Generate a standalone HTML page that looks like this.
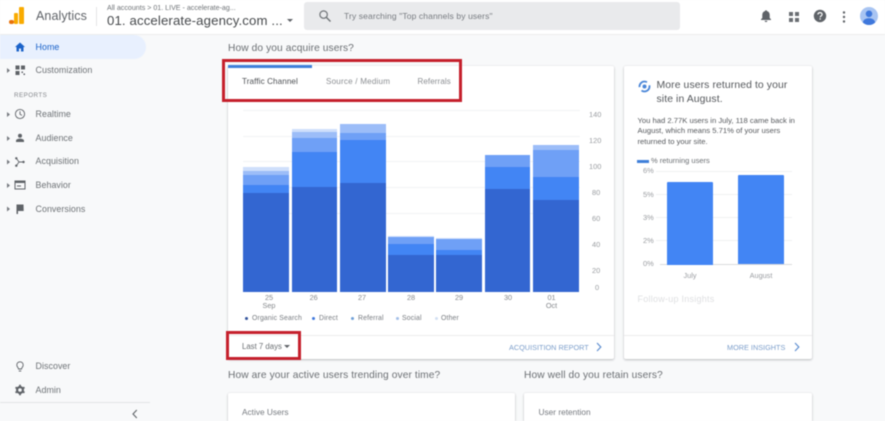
<!DOCTYPE html>
<html><head><meta charset="utf-8">
<style>
*{box-sizing:border-box}
html,body{margin:0;padding:0;width:885px;height:421px;overflow:hidden;background:#f8f9fa;font-family:"Liberation Sans",sans-serif;color:#5f6368}
#r{position:absolute;left:0;top:0;width:885px;height:421px;overflow:hidden;filter:blur(.4px)}
.a{position:absolute;white-space:nowrap}
.nav{font-size:8.900px;color:#6f7377;left:35.500px;letter-spacing:.05px}
.card{position:absolute;background:#fff;box-shadow:0 1px 2px rgba(60,64,67,.3),0 0 2px rgba(60,64,67,.08);border-radius:2px}
.h{font-size:10.200px;color:#6b6f73;letter-spacing:.1px}
.b{position:absolute;width:45.500px}
.b i{position:absolute;left:0;right:0;display:block}
.o{background:#3366d1}.d{background:#4285f4}.f{background:#6fa0f6}.s{background:#9cbdf8}.t{background:#cfdffb}
.yl{font-size:7.400px;color:#9a9da1;left:589px}
.xl{font-size:7.300px;color:#85888c;text-align:center;width:30px}
.g{position:absolute;height:1px;background:#f2f3f4}
.lg{font-size:6.900px;color:#777b80;letter-spacing:.15px}
.dot{position:absolute;width:3px;height:3px;border-radius:50%}
.red{position:absolute;border:3px solid #c5202c}
svg{position:absolute;display:block}
</style></head><body><div id="r">

<div class="a" style="left:0;top:0;width:885px;height:35px;background:#fff;border-bottom:1px solid #eceded"></div>
<div class="a" style="left:9px;top:20px;width:5px;height:4px;background:#e8710a;border-radius:2px"></div>
<div class="a" style="left:14px;top:13px;width:4px;height:11px;background:#f9ab00;border-radius:1px"></div>
<div class="a" style="left:19px;top:7px;width:5px;height:17px;background:#f9ab00;border-radius:1px"></div>
<div class="a" style="left:36px;top:8.500px;font-size:12.500px;color:#5f6368;letter-spacing:.1px">Analytics</div>
<div class="a" style="left:96px;top:7px;width:1px;height:19px;background:#e3e4e5"></div>
<div class="a" style="left:107px;top:3.500px;font-size:7.100px;color:#6f7377">All accounts &gt; 01. LIVE - accelerate-ag...</div>
<div class="a" style="left:107px;top:13px;font-size:13.200px;color:#474a4d;letter-spacing:.13px">01. accelerate-agency.com ...</div>
<div class="a" style="left:287px;top:19px;border:3.500px solid transparent;border-top:3.500px solid #5f6368;border-bottom:0"></div>
<div class="a" style="left:304px;top:2px;width:376px;height:28px;background:#e9eaec;border-radius:3px"></div>
<svg style="left:318px;top:9px" width="14" height="14" viewBox="0 0 14 14"><circle cx="5.600" cy="5.600" r="3.700" fill="none" stroke="#6f7377" stroke-width="1.200"/><path d="M8.500 8.500L12.500 12.500" stroke="#6f7377" stroke-width="1.400"/></svg>
<div class="a" style="left:344px;top:10.500px;font-size:8.500px;color:#777b80;letter-spacing:.12px">Try searching "Top channels by users"</div>

<svg style="left:759px;top:9px" width="14" height="14" viewBox="0 0 14 14"><path d="M7 1.200c.6 0 1 .4 1 .9 1.800.5 2.700 2 2.700 3.800V9l1.300 1.300v.7H2v-.7L3.300 9V5.900C3.300 4.100 4.200 2.600 6 2.100c0-.5.4-.9 1-.9zM5.700 11.700h2.600A1.300 1.300 0 0 1 5.700 11.700z" fill="#5f6368"/></svg>
<svg style="left:789px;top:12px" width="10" height="10" viewBox="0 0 10 10" fill="#6a6e72"><rect x="0" y="0" width="4" height="4"/><rect x="6" y="0" width="4" height="4"/><rect x="0" y="6" width="4" height="4"/><rect x="6" y="6" width="4" height="4"/></svg>
<svg style="left:813px;top:9px" width="14" height="14" viewBox="0 0 14 14"><circle cx="7" cy="7" r="6.200" fill="#5f6368"/><path d="M4.900 5.500C5 4.200 6 3.600 7 3.600c1.200 0 2.100.8 2.100 1.800 0 1.500-1.900 1.500-1.900 3" fill="none" stroke="#fff" stroke-width="1.200"/><rect x="6.500" y="9.300" width="1.300" height="1.300" fill="#fff"/></svg>
<svg style="left:842px;top:11px" width="4" height="12" viewBox="0 0 4 12" fill="#5f6368"><circle cx="2" cy="1.500" r="1.200"/><circle cx="2" cy="6" r="1.200"/><circle cx="2" cy="10.500" r="1.200"/></svg>
<svg style="left:860px;top:7px" width="18" height="18" viewBox="0 0 18 18"><circle cx="9" cy="9" r="9" fill="#a8c4f2"/><circle cx="9" cy="6.800" r="3.300" fill="#3f78dc"/><path d="M2.800 15.500C3.500 12.500 6 11.300 9 11.300s5.500 1.200 6.200 4.200A9 9 0 0 1 2.800 15.500z" fill="#3f78dc"/></svg>

<!-- sidebar -->
<div class="a" style="left:0;top:35px;width:146px;height:24px;background:#e8f0fe;border-radius:0 12px 12px 0"></div>
<svg style="left:14px;top:41px" width="12" height="12" viewBox="0 0 12 12"><path d="M6 1.500L1 6h1.500v4.500h2.500V7.500h2v3h2.500V6H11z" fill="#1a62c9"/></svg>
<div class="a nav" style="top:41.500px;color:#1a62c9">Home</div>
<svg style="left:15px;top:65px" width="11" height="11" viewBox="0 0 11 11" fill="#5f6368"><rect x="0.500" y="0.500" width="4" height="4"/><rect x="6" y="0.500" width="4" height="4"/><rect x="0.500" y="6" width="4" height="4"/><rect x="6.500" y="6.500" width="1.500" height="1.500"/><rect x="8.500" y="8.500" width="1.500" height="1.500"/></svg>
<div class="a nav" style="top:65px">Customization</div>
<div class="a" style="left:14px;top:91.500px;font-size:6.300px;color:#85888c;letter-spacing:.42px">REPORTS</div>
<svg style="left:6px;top:0" width="5" height="220" viewBox="0 0 5 220" fill="#777b80"><path d="M1 68l3 2.500L1 73zM1 112l3 2.500L1 117zM1 136l3 2.500L1 141zM1 159.500l3 2.500L1 164.500zM1 183l3 2.500L1 188zM1 206.500l3 2.500L1 211.500z"/></svg>
<svg style="left:14px;top:108px" width="12" height="12" viewBox="0 0 12 12"><circle cx="6" cy="6" r="4.600" fill="none" stroke="#5f6368" stroke-width=".9"/><path d="M6 3.200V6.200L8 7.400" fill="none" stroke="#5f6368" stroke-width=".9"/></svg>
<div class="a nav" style="top:109px">Realtime</div>
<svg style="left:14px;top:132px" width="12" height="12" viewBox="0 0 12 12" fill="#5f6368"><circle cx="6" cy="3.800" r="2"/><path d="M2 10V8.600C2 7.300 4.500 6.600 6 6.600s4 .7 4 2V10z"/></svg>
<div class="a nav" style="top:132.500px">Audience</div>
<svg style="left:14px;top:155.500px" width="12" height="12" viewBox="0 0 12 12"><path d="M2.500 2.500L5 6l-2.500 3.500M5 6h4" fill="none" stroke="#5f6368" stroke-width=".9"/><circle cx="2.300" cy="2.300" r="1.200" fill="#5f6368"/><circle cx="2.300" cy="9.700" r="1.200" fill="#5f6368"/><circle cx="9.500" cy="6" r="1.200" fill="#5f6368"/></svg>
<div class="a nav" style="top:156px">Acquisition</div>
<svg style="left:14px;top:179px" width="12" height="12" viewBox="0 0 12 12"><rect x="1" y="2" width="10" height="8" fill="none" stroke="#5f6368" stroke-width="1"/><rect x="1" y="2" width="10" height="2" fill="#5f6368"/><rect x="3" y="6.500" width="4" height="1" fill="#5f6368"/></svg>
<div class="a nav" style="top:179.500px">Behavior</div>
<svg style="left:14px;top:202.500px" width="12" height="12" viewBox="0 0 12 12"><path d="M2.500 1.500H9.500L9.700 8H4V11H2.500z" fill="#5f6368"/></svg>
<div class="a nav" style="top:203.500px">Conversions</div>
<svg style="left:14px;top:360px" width="12" height="13" viewBox="0 0 12 13"><path d="M4.500 9C4.500 7.500 2.800 7 2.800 5A3.200 3.200 0 0 1 9.200 5C9.200 7 7.500 7.500 7.500 9zM4.800 11h2.400" fill="none" stroke="#5f6368" stroke-width=".9"/></svg>
<div class="a nav" style="top:361px">Discover</div>
<svg style="left:14px;top:384px" width="12" height="12" viewBox="0 0 12 12"><circle cx="6" cy="6" r="2.900" fill="none" stroke="#5f6368" stroke-width="2.200"/><path d="M6 .8V2.500M6 9.500v1.700M1.500 3.400L3 4.200M9 7.800l1.500.8M1.500 8.600L3 7.800M9 4.200l1.500-.8" stroke="#5f6368" stroke-width="1.800"/></svg>
<div class="a nav" style="top:384.500px">Admin</div>
<div class="a" style="left:0;top:402px;width:150px;height:1px;background:#e3e4e6"></div>
<svg style="left:131px;top:409px" width="8" height="10" viewBox="0 0 8 10"><path d="M5.800 1L2 5l3.800 4" fill="none" stroke="#5f6368" stroke-width="1.100"/></svg>

<!-- headings -->
<div class="a h" style="left:228px;top:42.500px">How do you acquire users?</div>
<div class="a h" style="left:228px;top:369.500px">How are your active users trending over time?</div>
<div class="a h" style="left:524px;top:369.500px">How well do you retain users?</div>

<!-- main card -->
<div class="card" style="left:228px;top:66px;width:386px;height:293px"></div>
<div class="a" style="left:228px;top:65px;width:84px;height:3px;background:#3f7fd9"></div>
<div class="a" style="left:242px;top:76.500px;font-size:8.100px;color:#4d5054;letter-spacing:.1px">Traffic Channel</div>
<div class="a" style="left:326px;top:76.500px;font-size:8.100px;color:#8b8e92;letter-spacing:.2px">Source / Medium</div>
<div class="a" style="left:417.500px;top:76.500px;font-size:8px;color:#8b8e92;letter-spacing:.1px">Referrals</div>

<div class="g" style="left:243px;top:110px;width:337px"></div>
<div class="g" style="left:243px;top:136px;width:337px"></div>
<div class="g" style="left:243px;top:161px;width:337px"></div>
<div class="g" style="left:243px;top:187px;width:337px"></div>
<div class="g" style="left:243px;top:213px;width:337px"></div>

<div class="b" style="left:243.300px;top:167px;height:125px"><i class="t" style="top:0;height:4px"></i><i class="s" style="top:4px;height:4px"></i><i class="f" style="top:8px;height:10px"></i><i class="d" style="top:18px;height:8px"></i><i class="o" style="top:26px;bottom:0"></i></div>
<div class="b" style="left:291.700px;top:129px;height:163px"><i class="t" style="top:0;height:3px"></i><i class="s" style="top:3px;height:6px"></i><i class="f" style="top:9px;height:14px"></i><i class="d" style="top:23px;height:35px"></i><i class="o" style="top:58px;bottom:0"></i></div>
<div class="b" style="left:340px;top:124px;height:168px"><i class="s" style="top:0;height:9px"></i><i class="f" style="top:9px;height:7px"></i><i class="d" style="top:16px;height:43px"></i><i class="o" style="top:59px;bottom:0"></i></div>
<div class="b" style="left:388.300px;top:236px;height:56px"><i class="t" style="top:0;height:1px"></i><i class="f" style="top:1px;height:7px"></i><i class="d" style="top:8px;height:11px"></i><i class="o" style="top:19px;bottom:0"></i></div>
<div class="b" style="left:436.300px;top:238px;height:54px"><i class="t" style="top:0;height:1px"></i><i class="f" style="top:1px;height:11px"></i><i class="d" style="top:12px;height:5px"></i><i class="o" style="top:17px;bottom:0"></i></div>
<div class="b" style="left:484.500px;top:155px;height:137px"><i class="f" style="top:0;height:12px"></i><i class="d" style="top:12px;height:22px"></i><i class="o" style="top:34px;bottom:0"></i></div>
<div class="b" style="left:533px;top:145px;height:147px"><i class="s" style="top:0;height:5px"></i><i class="f" style="top:5px;height:27px"></i><i class="d" style="top:32px;height:23px"></i><i class="o" style="top:55px;bottom:0"></i></div>

<div class="a yl" style="top:109.500px">140</div>
<div class="a yl" style="top:135.500px">120</div>
<div class="a yl" style="top:161.500px">100</div>
<div class="a yl" style="left:592px;top:187.500px" >80</div>
<div class="a yl" style="left:592px;top:213.500px">60</div>
<div class="a yl" style="left:592px;top:239.500px">40</div>
<div class="a yl" style="left:592px;top:265.500px">20</div>
<div class="a yl" style="left:595px;top:282.500px">0</div>

<div class="a xl" style="left:254px;top:294px;line-height:8px">25<br>Sep</div>
<div class="a xl" style="left:298.700px;top:294px;line-height:8px">26</div>
<div class="a xl" style="left:347px;top:294px;line-height:8px">27</div>
<div class="a xl" style="left:396px;top:294px;line-height:8px">28</div>
<div class="a xl" style="left:444px;top:294px;line-height:8px">29</div>
<div class="a xl" style="left:493px;top:294px;line-height:8px">30</div>
<div class="a xl" style="left:536.500px;top:294px;line-height:8px">01<br>Oct</div>

<div class="dot" style="left:245px;top:317px;background:#33539c"></div>
<div class="a lg" style="left:252px;top:314.600px">Organic Search</div>
<div class="dot" style="left:312px;top:317px;background:#3f78dc"></div>
<div class="a lg" style="left:319px;top:314.600px">Direct</div>
<div class="dot" style="left:351px;top:317px;background:#6fa0d8"></div>
<div class="a lg" style="left:358px;top:314.600px">Referral</div>
<div class="dot" style="left:396px;top:317px;background:#a3bfe8"></div>
<div class="a lg" style="left:402px;top:314.600px">Social</div>
<div class="dot" style="left:435px;top:317px;background:#d3e0f3"></div>
<div class="a lg" style="left:441px;top:314.600px">Other</div>

<div class="a" style="left:228px;top:335px;width:386px;height:1px;background:#eceded"></div>
<div class="a" style="left:242px;top:341.500px;font-size:7.800px;color:#6b6f73">Last 7 days</div>
<div class="a" style="left:284px;top:345px;border:3px solid transparent;border-top:3px solid #5f6368;border-bottom:0"></div>
<div class="a" style="left:509px;top:342.500px;font-size:7.300px;color:#7d9fcb">ACQUISITION REPORT</div>
<svg style="left:595px;top:342px" width="8" height="10" viewBox="0 0 8 10"><path d="M2 1l3.800 4L2 9" fill="none" stroke="#5f8fd0" stroke-width="1.200"/></svg>

<div class="red" style="left:222px;top:59px;width:240px;height:43px"></div>
<div class="red" style="left:225.500px;top:331px;width:75px;height:29px"></div>

<!-- insights card -->
<div class="card" style="left:624px;top:66px;width:188px;height:293px"></div>
<svg style="left:637px;top:79px" width="15" height="15" viewBox="0 0 15 15"><circle cx="7.500" cy="7.500" r="5" fill="none" stroke="#4a86d8" stroke-width="1.800" stroke-dasharray="11 4"/><circle cx="7.500" cy="7.500" r="2" fill="#4a86d8"/></svg>
<div class="a" style="left:656.500px;top:79px;font-size:10.400px;line-height:14px;color:#55585c;letter-spacing:.1px">More users returned to your<br>site in August.</div>
<div class="a" style="left:637.500px;top:115.500px;font-size:7.650px;line-height:10.700px;color:#56595d">You had 2.77K users in July, 118 came back in<br>August, which means 5.71% of your users<br>returned to your site.</div>
<div class="a" style="left:637px;top:160px;width:12px;height:3px;background:#3f7fd9"></div>
<div class="a" style="left:651px;top:155.500px;font-size:7.500px;color:#6b6f73">% returning users</div>

<div class="g" style="left:656px;top:171px;width:136px;background:#f0f1f2"></div>
<div class="g" style="left:656px;top:194px;width:136px;background:#f0f1f2"></div>
<div class="g" style="left:656px;top:217px;width:136px;background:#f0f1f2"></div>
<div class="g" style="left:656px;top:240px;width:136px;background:#f0f1f2"></div>
<div class="a" style="left:660px;top:264px;width:132px;height:1px;background:#dadbdc"></div>
<div class="a" style="left:667px;top:181.500px;width:46px;height:83px;background:#4285f4;border-radius:1px 1px 0 0"></div>
<div class="a" style="left:738px;top:175px;width:46px;height:89px;background:#4285f4;border-radius:1px 1px 0 0"></div>
<div class="a yl" style="left:643px;top:166px;font-size:7.500px">6%</div>
<div class="a yl" style="left:643px;top:190px;font-size:7.500px">5%</div>
<div class="a yl" style="left:643px;top:213px;font-size:7.500px">3%</div>
<div class="a yl" style="left:643px;top:236px;font-size:7.500px">2%</div>
<div class="a yl" style="left:643px;top:259px;font-size:7.500px">0%</div>
<div class="a xl" style="left:675px;top:271px;color:#9a9da1">July</div>
<div class="a xl" style="left:746px;top:271px;color:#9a9da1">August</div>
<div class="a" style="left:637.500px;top:293.500px;font-size:9px;color:#dfe0e2;letter-spacing:.25px">Follow-up Insights</div>
<div class="a" style="left:624px;top:335px;width:188px;height:1px;background:#eceded"></div>
<div class="a" style="left:727px;top:342.500px;font-size:7.300px;color:#7d9fcb">MORE INSIGHTS</div>
<svg style="left:793px;top:342px" width="8" height="10" viewBox="0 0 8 10"><path d="M2 1l3.800 4L2 9" fill="none" stroke="#5f8fd0" stroke-width="1.200"/></svg>

<!-- lower cards -->
<div class="card" style="left:228px;top:393px;width:287px;height:40px"></div>
<div class="a" style="left:242px;top:407px;font-size:8.300px;color:#777b80">Active Users</div>
<div class="card" style="left:524px;top:393px;width:288px;height:40px"></div>
<div class="a" style="left:538.500px;top:407px;font-size:8.300px;color:#777b80">User retention</div>

</div></body></html>
